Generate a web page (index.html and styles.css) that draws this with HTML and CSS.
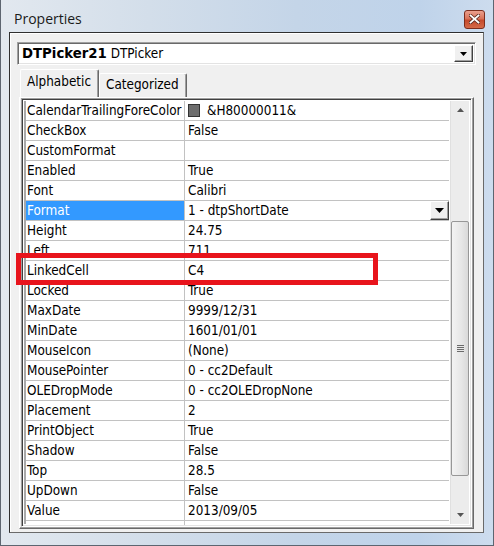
FILE: index.html
```html
<!DOCTYPE html>
<html>
<head>
<meta charset="utf-8">
<link rel="stylesheet" href="styles.css">
</head>
<body>
<div class="window">
  <div class="titlebar">
    <span class="title">Properties</span>
    <div class="close">
      <svg width="11" height="10" viewBox="0 0 11 10"><path d="M1.5 1.5 L9.5 8.5 M9.5 1.5 L1.5 8.5" stroke="#5a2a20" stroke-width="3.4" stroke-linecap="square"/><path d="M1.5 1.5 L9.5 8.5 M9.5 1.5 L1.5 8.5" stroke="#fff" stroke-width="1.8" stroke-linecap="square"/></svg>
    </div>
  </div>
  <div class="client">
    <div class="combo">
      <div class="combo-text"><b>DTPicker21</b> DTPicker</div>
      <div class="dd-btn"><svg width="7" height="4" viewBox="0 0 7 4"><path d="M0 0 H7 L3.5 4 Z" fill="#000"/></svg></div>
    </div>
    <div class="tabs">
      <div class="tab active">Alphabetic</div>
      <div class="tab">Categorized</div>
    </div>
    <div class="panel">
      <div class="grid">
        <div class="gutter"></div>
        <div class="rows">
          <div class="row"><div class="name">CalendarTrailingForeColor</div><div class="value"><span class="swatch"></span>&amp;H80000011&amp;</div></div>
          <div class="row"><div class="name">CheckBox</div><div class="value">False</div></div>
          <div class="row"><div class="name">CustomFormat</div><div class="value"></div></div>
          <div class="row"><div class="name">Enabled</div><div class="value">True</div></div>
          <div class="row"><div class="name">Font</div><div class="value">Calibri</div></div>
          <div class="row"><div class="name selected">Format</div><div class="value">1 - dtpShortDate<span class="cell-btn"><svg width="9" height="5" viewBox="0 0 9 5"><path d="M0 0 H9 L4.5 5 Z" fill="#000"/></svg></span></div></div>
          <div class="row"><div class="name">Height</div><div class="value">24.75</div></div>
          <div class="row"><div class="name">Left</div><div class="value">711</div></div>
          <div class="row"><div class="name">LinkedCell</div><div class="value">C4</div></div>
          <div class="row"><div class="name">Locked</div><div class="value">True</div></div>
          <div class="row"><div class="name">MaxDate</div><div class="value">9999/12/31</div></div>
          <div class="row"><div class="name">MinDate</div><div class="value">1601/01/01</div></div>
          <div class="row"><div class="name">MouseIcon</div><div class="value">(None)</div></div>
          <div class="row"><div class="name">MousePointer</div><div class="value">0 - cc2Default</div></div>
          <div class="row"><div class="name">OLEDropMode</div><div class="value">0 - cc2OLEDropNone</div></div>
          <div class="row"><div class="name">Placement</div><div class="value">2</div></div>
          <div class="row"><div class="name">PrintObject</div><div class="value">True</div></div>
          <div class="row"><div class="name">Shadow</div><div class="value">False</div></div>
          <div class="row"><div class="name">Top</div><div class="value">28.5</div></div>
          <div class="row"><div class="name">UpDown</div><div class="value">False</div></div>
          <div class="row"><div class="name">Value</div><div class="value">2013/09/05</div></div>
          <div class="row partial"><div class="name"></div><div class="value"></div></div>
        </div>
        <div class="scrollbar">
          <div class="sb-arrow"><svg width="7" height="4" viewBox="0 0 7 4"><path d="M0 4 H7 L3.5 0 Z" fill="#555"/></svg></div>
          <div class="sb-track-top"></div>
          <div class="sb-thumb"><span class="grip"></span></div>
          <div class="sb-track-bottom"></div>
          <div class="sb-arrow"><svg width="7" height="4" viewBox="0 0 7 4"><path d="M0 0 H7 L3.5 4 Z" fill="#555"/></svg></div>
        </div>
      </div>
    </div>
  </div>
  <div class="highlight"></div>
</div>
</body>
</html>
```
FILE: styles.css
```css
html, body {
  margin: 0;
  padding: 0;
  background: #dbe4ee;
}
.window {
  position: relative;
  width: 494px;
  height: 546px;
  box-sizing: border-box;
  border: 1px solid #5d6570;
  border-top: none;
  background: linear-gradient(to right, #e2e8ef 0%, #d3deea 30%, #c4d5e8 60%, #bfd3ea 85%, #cddcee 100%);
  padding: 0 9px 0 8px;
  display: flex;
  flex-direction: column;
  font-family: "DejaVu Sans Condensed", "DejaVu Sans", sans-serif;
  font-size: 13.4px;
  color: #000;
}
.titlebar {
  height: 32px;
  display: flex;
  align-items: center;
  justify-content: space-between;
  padding-left: 5px;
}
.title {
  font-family: "Open Sans", "Noto Sans", sans-serif;
  font-size: 14px;
  color: #1a1a1a;
  margin-top: 4px;
}
.close {
  width: 21px;
  height: 19px;
  margin-right: -1px;
  margin-top: 6px;
  box-sizing: border-box;
  border: 1px solid #7c2e1e;
  border-radius: 3px;
  background: linear-gradient(#eba08e 0%, #d9735a 45%, #c54a2c 55%, #d56a48 100%);
  display: flex;
  align-items: center;
  justify-content: center;
}
.client {
  height: 501px;
  box-sizing: border-box;
  border: 1px solid #2f2f2f;
  border-right-color: #6a6a6a;
  border-bottom-color: #6a6a6a;
  box-shadow: inset 1px 1px 0 #ffffff;
  background: #f0f0f0;
  padding: 9px 6px 0 7px;
  display: flex;
  flex-direction: column;
}
.combo {
  width: 459px;
  height: 23px;
  box-sizing: border-box;
  border: 1px solid #a0a0a0;
  border-right-color: #ffffff;
  border-bottom-color: #ffffff;
  box-shadow: inset 1px 1px 0 #696969, inset -1px -1px 0 #e3e3e3;
  background: #fff;
  display: flex;
  align-items: center;
  justify-content: space-between;
  padding: 0 2px 0 4px;
}
.combo-text {
  font-size: 13.4px;
}
.combo-text b {
  font-family: "DejaVu Sans", sans-serif;
  font-weight: bold;
  font-size: 13.3px;
  letter-spacing: 0;
}
.dd-btn {
  width: 19px;
  height: 17px;
  box-sizing: border-box;
  background: #f0f0f0;
  border: 1px solid #fff;
  border-right-color: #404040;
  border-bottom-color: #404040;
  box-shadow: inset -1px -1px 0 #a0a0a0;
  display: flex;
  align-items: center;
  justify-content: center;
}
.tabs {
  display: flex;
  align-items: flex-end;
  height: 28px;
  margin-top: 4px;
  padding-left: 3px;
}
.tab {
  box-sizing: border-box;
  height: 24px;
  border: 1px solid #fff;
  border-bottom: none;
  border-right: 1px solid #696969;
  box-shadow: inset -1px 0 0 #a0a0a0;
  padding: 3px 7px 0 6px;
  font-size: 13.4px;
  border-radius: 2px 2px 0 0;
}
.tab.active {
  height: 28px;
  padding-top: 4px;
  position: relative;
  z-index: 1;
}
.panel {
  width: 455px;
  height: 432px;
  box-sizing: border-box;
  margin-left: 2px;
  border: 1px solid #fff;
  border-right-color: #696969;
  border-bottom-color: #696969;
  box-shadow: inset -1px -1px 0 #a0a0a0;
  padding: 0 1px 0 1px;
  display: flex;
}
.grid {
  width: 451px;
  height: 429px;
  box-sizing: border-box;
  border: 1px solid #a0a0a0;
  border-right-color: #fff;
  border-bottom-color: #fff;
  box-shadow: inset 1px 1px 0 #404040, inset -1px -1px 0 #e3e3e3;
  padding: 2px 2px 2px 2px;
  display: flex;
  overflow: hidden;
  background: #fff;
}
.gutter {
  width: 2px;
  background: #a9a9a9;
}
.rows {
  width: 427px;
  display: flex;
  flex-direction: column;
}
.row {
  display: flex;
  height: 20px;
  flex: none;
  box-sizing: border-box;
  border-bottom: 1px solid #c2c2c2;
  line-height: 18px;
}
.row.partial {
  height: 4px;
  border-bottom: none;
}
.name {
  width: 159px;
  box-sizing: border-box;
  border-right: 1px solid #c2c2c2;
  padding: 1px 0 0 1px;
  white-space: nowrap;
  overflow: hidden;
}
.name.selected {
  background: #3399ff;
  color: #fff;
}
.value {
  flex: 1;
  padding: 1px 0 0 3px;
  white-space: nowrap;
  display: flex;
  align-items: flex-start;
  position: relative;
}
.swatch {
  width: 12px;
  height: 13px;
  box-sizing: border-box;
  background: #6d6d6d;
  border: 1px solid #333;
  margin: 2px 7px 0 0;
}
.cell-btn {
  position: absolute;
  right: 0;
  top: 0;
  width: 19px;
  height: 19px;
  box-sizing: border-box;
  background: #f0f0f0;
  border: 1px solid #fff;
  border-right-color: #404040;
  border-bottom-color: #404040;
  box-shadow: inset -1px -1px 0 #a0a0a0;
  display: flex;
  align-items: center;
  justify-content: center;
}
.scrollbar {
  width: 18px;
  margin-left: 1px;
  display: flex;
  flex-direction: column;
  background: #ececec;
  border-left: 1px solid #e0e0e0;
}
.sb-arrow {
  height: 18px;
  display: flex;
  align-items: center;
  justify-content: center;
  flex: none;
}
.sb-track-top {
  height: 102px;
  flex: none;
}
.sb-thumb {
  height: 255px;
  flex: none;
  box-sizing: border-box;
  border: 1px solid #979797;
  border-radius: 2px;
  background: linear-gradient(to right, #f3f3f3, #e6e6e6 60%, #d9d9d9);
  display: flex;
  align-items: center;
  justify-content: center;
}
.grip {
  width: 7px;
  height: 7px;
  background: repeating-linear-gradient(to bottom, #6a6a6a 0 1px, #e8e8e8 1px 2px);
}
.sb-track-bottom {
  flex: 1;
}
.highlight {
  position: absolute;
  left: 15px;
  top: 253px;
  width: 362px;
  height: 32px;
  box-sizing: border-box;
  border: 5px solid #e8141c;
}
```
